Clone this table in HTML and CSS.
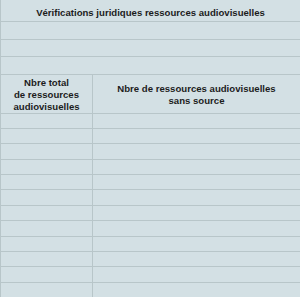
FILE: index.html
```html
<!DOCTYPE html>
<html lang="fr">
<head>
<meta charset="utf-8">
<title>Vérifications juridiques</title>
<link rel="stylesheet" href="styles.css">
</head>
<body>
<div class="sheet">
  <div class="row title">Vérifications juridiques ressources audiovisuelles</div>
  <div class="row blank r2"></div>
  <div class="row blank r3"></div>
  <div class="row blank r4"></div>
  <div class="row grid head">
    <div class="cell first">Nbre total<br>de ressources<br>audiovisuelles</div>
    <div class="cell">Nbre de ressources audiovisuelles<br>sans source</div>
  </div>
  <div class="row grid data"><div class="cell first"></div><div class="cell"></div></div>
  <div class="row grid data"><div class="cell first"></div><div class="cell"></div></div>
  <div class="row grid data"><div class="cell first"></div><div class="cell"></div></div>
  <div class="row grid data"><div class="cell first"></div><div class="cell"></div></div>
  <div class="row grid data"><div class="cell first"></div><div class="cell"></div></div>
  <div class="row grid data"><div class="cell first"></div><div class="cell"></div></div>
  <div class="row grid data"><div class="cell first"></div><div class="cell"></div></div>
  <div class="row grid data"><div class="cell first"></div><div class="cell"></div></div>
  <div class="row grid data"><div class="cell first"></div><div class="cell"></div></div>
  <div class="row grid data"><div class="cell first"></div><div class="cell"></div></div>
  <div class="row grid data"><div class="cell first"></div><div class="cell"></div></div>
  <div class="row grid data"><div class="cell first"></div><div class="cell"></div></div>
</div>
</body>
</html>
```
FILE: styles.css
```css
html, body {
  margin: 0;
  padding: 0;
  background: #d3e0e4;
}
.sheet {
  width: 300px;
  height: 297px;
  overflow: hidden;
  box-sizing: border-box;
  background: #d3e0e4;
  border-left: 1px solid #b8c6c9;
  display: flex;
  flex-direction: column;
  font-family: "Liberation Sans", Arial, sans-serif;
  font-weight: bold;
  font-size: 9.6px;
  color: #1c1c1c;
}
.row {
  flex: none;
  box-sizing: border-box;
  border-bottom: 1px solid #b8c6c9;
}
.title {
  height: 22px;
  display: flex;
  align-items: center;
  justify-content: center;
  padding-top: 4px;
}
.r2 { height: 18px; }
.r3 { height: 17px; }
.r4 { height: 18px; }
.grid {
  display: grid;
  grid-template-columns: 92px 1fr;
}
.head {
  height: 38.5px;
}
.data {
  height: 15.4px;
}
.cell {
  display: flex;
  align-items: center;
  justify-content: center;
  text-align: center;
  line-height: 12px;
}
.first {
  border-right: 1px solid #b8c6c9;
}
.head .cell {
  padding-top: 2px;
}
```
